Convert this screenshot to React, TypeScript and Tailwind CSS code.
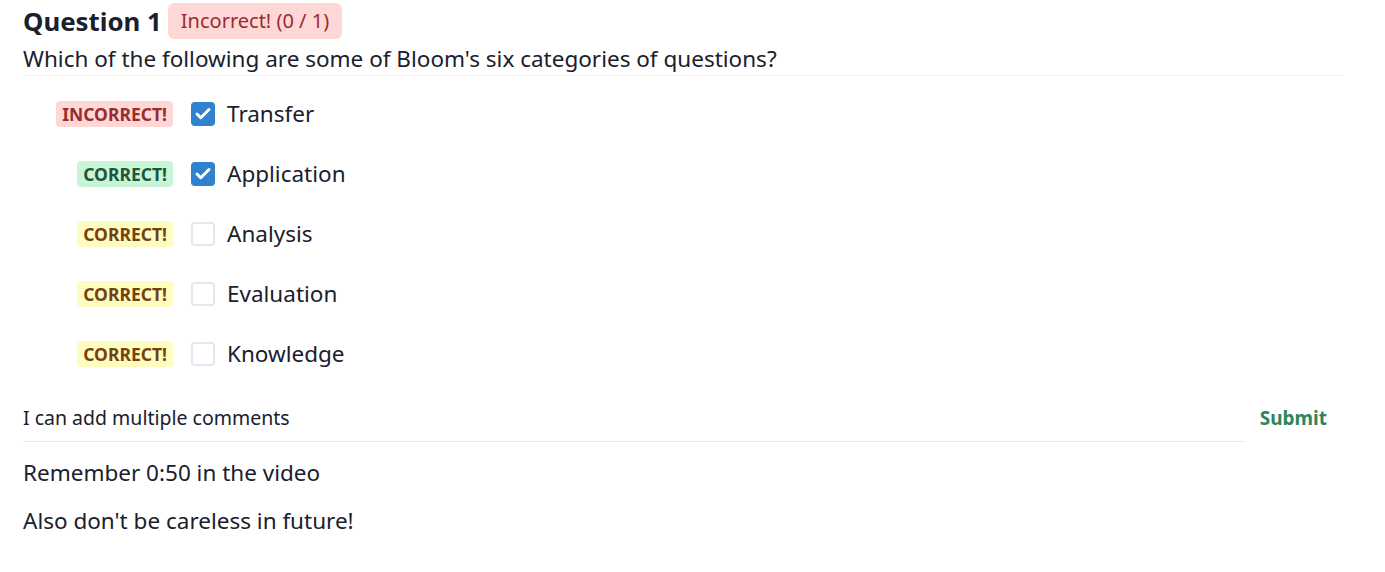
import { Check } from "lucide-react"

type Option = {
  label: string
  checked: boolean
  status: "incorrect" | "correct" | "missed"
}

const options: Option[] = [
  { label: "Transfer", checked: true, status: "incorrect" },
  { label: "Application", checked: true, status: "correct" },
  { label: "Analysis", checked: false, status: "missed" },
  { label: "Evaluation", checked: false, status: "missed" },
  { label: "Knowledge", checked: false, status: "missed" },
]

const comments = ["Remember 0:50 in the video", "Also don't be careless in future!"]

function StatusBadge({ status }: { status: Option["status"] }) {
  if (status === "incorrect") {
    return (
      <span className="rounded-sm bg-[#fed7d7] px-[6px] py-[2px] text-[17.5px] font-bold leading-[22px] text-[#9b2c2c]">
        INCORRECT!
      </span>
    )
  }
  if (status === "correct") {
    return (
      <span className="rounded-sm bg-[#c6f6d5] px-[6px] py-[2px] text-[17.5px] font-bold leading-[22px] text-[#22543d]">
        CORRECT!
      </span>
    )
  }
  return (
    <span className="rounded-sm bg-[#fefcbf] px-[6px] py-[2px] text-[17.5px] font-bold leading-[22px] text-[#744210]">
      CORRECT!
    </span>
  )
}

export default function App() {
  return (
    <main
      className="min-h-screen bg-white px-[23px] pt-[3px] text-[#1a202c]"
      style={{ fontFamily: '"Noto Sans", "Open Sans", sans-serif' }}
    >
      {/* Header */}
      <div className="flex items-center gap-[6px]">
        <h2 className="text-[25.8px] font-bold leading-[36px]">Question 1</h2>
        <span className="rounded-md bg-[#fed7d7] px-[13px] py-[4px] text-[20px] leading-[28px] text-[#9b2c2c]">
          Incorrect! (0 / 1)
        </span>
      </div>
      <p className="mr-[19px] mt-[4px] border-b border-[#edf2f7] text-[22.5px] leading-[32px]">
        Which of the following are some of Bloom's six categories of questions?
      </p>

      {/* Options */}
      <div className="flex flex-col pt-[8px]">
        {options.map((opt) => (
          <div key={opt.label} className="flex h-[60px] items-center">
            <div className="flex w-[150px] justify-end">
              <StatusBadge status={opt.status} />
            </div>
            <div className="ml-[18px] flex items-center">
              {opt.checked ? (
                <span className="flex h-[24px] w-[24px] items-center justify-center rounded-[4px] bg-[#3182ce]">
                  <Check className="h-[18px] w-[18px] text-white" strokeWidth={4} />
                </span>
              ) : (
                <span className="h-[24px] w-[24px] rounded-[4px] border-2 border-[#e2e8f0] bg-white" />
              )}
              <span className="ml-[12px] text-[22.5px] leading-[32px]">{opt.label}</span>
            </div>
          </div>
        ))}
      </div>

      {/* Comment input */}
      <div className="mt-[18px] flex items-center">
        <div className="flex-1 border-b border-[#e2e8f0] pb-[9px] pt-[2px] text-[19.5px] leading-[28px]">
          I can add multiple comments
        </div>
        <button className="ml-[15px] mr-[35px] pb-[8px] text-[19px] font-bold leading-[28px] text-[#2f855a]">
          Submit
        </button>
      </div>

      {/* Comments */}
      <div className="flex flex-col gap-[16px] pt-[15px]">
        {comments.map((c) => (
          <p key={c} className="text-[22.5px] leading-[32px]">
            {c}
          </p>
        ))}
      </div>
    </main>
  )
}
